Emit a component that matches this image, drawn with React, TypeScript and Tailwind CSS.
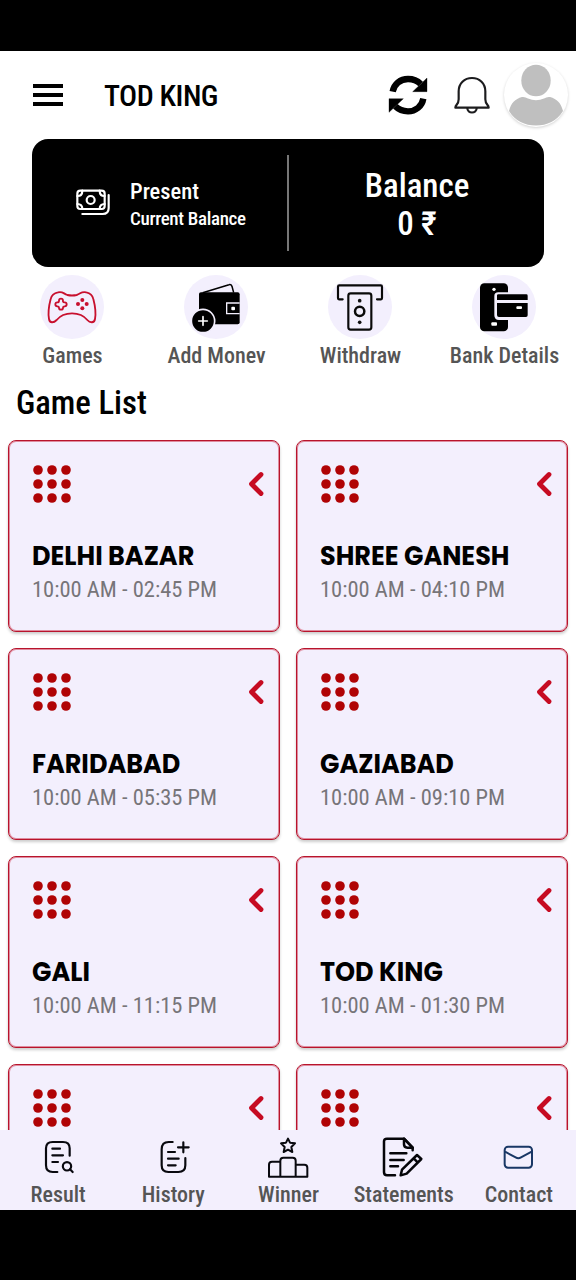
import React from 'react';

const games = [
  { name: 'DELHI BAZAR', time: '10:00 AM - 02:45 PM' },
  { name: 'SHREE GANESH', time: '10:00 AM - 04:10 PM' },
  { name: 'FARIDABAD', time: '10:00 AM - 05:35 PM' },
  { name: 'GAZIABAD', time: '10:00 AM - 09:10 PM' },
  { name: 'GALI', time: '10:00 AM - 11:15 PM' },
  { name: 'TOD KING', time: '10:00 AM - 01:30 PM' },
  { name: '', time: '' },
  { name: '', time: '' },
];

const RefreshIcon = () => (
  <svg className="h-10 w-10" viewBox="36 75 120 120">
    {[0, 180].map((angle) => (
      <g key={angle} transform={`rotate(${angle} 96 135.5)`}>
        <path d="M50 125 C54 102 73 87 96 87 C112 87 124 92 134 102" fill="none" stroke="#000" strokeWidth="19" />
        <path d="M153 84 V125 H110 Z" fill="#000" stroke="#000" strokeWidth="1" />
      </g>
    ))}
  </svg>
);

const BellIcon = () => (
  <svg className="h-10 w-10" viewBox="230 75 120 120" fill="none" stroke="#1c1c1e" strokeWidth="6.5" strokeLinejoin="round">
    <path d="M240 173 C240 164 250 164 250 148 V124 C250 100 267 84 290 84 S330 100 330 124 V148 C330 164 340 164 340 173 Z" />
    <path d="M276 174 C276 192 304 192 304 174" />
  </svg>
);

const AvatarIcon = () => (
  <svg className="h-16 w-16" viewBox="0 0 64 64" fill="#bfbfbf">
    <ellipse cx="32" cy="17.5" rx="14.7" ry="15.8" />
    <path d="M18 34 Q21 33.5 24 35.5 Q32 39 40 35.5 Q43 33.5 46 34 C53 36 57 40 59 48 C53 58 43 62.5 32 62.5 S11 58 5 48 C7 40 11 36 18 34 Z" />
  </svg>
);

const MoneyIcon = () => (
  <svg className="h-[30px] w-9" viewBox="166 178 108 90" fill="none" stroke="#fff" strokeWidth="6.5" strokeLinecap="round">
    <rect x="173" y="186" width="82" height="55" rx="9" />
    <circle cx="213" cy="214" r="12" />
    <path d="M173 202 Q188 202 188 186 M240 186 Q240 202 255 202 M173 226 Q188 226 188 241 M240 241 Q240 226 255 226" />
    <path d="M267 199 V238 Q267 256 249 256 H188" />
  </svg>
);

const GamesIcon = () => (
  <svg className="h-16 w-16" viewBox="120 14 192 192" fill="none" stroke="#c8102e" strokeWidth="5.5" strokeLinejoin="round">
    <path d="M174 66 C188 62 190 70 202 74 Q216 77 230 74 C243 70 244 62 259 66 C269 68 277 73 280 86 C285 105 288 130 285 146 C283 159 270 158 262 149 C250 134 236 129 216 129 S182 134 170 149 C161 158 149 159 147 146 C144 130 147 105 152 86 C155 73 163 68 174 66 Z" />
    <path d="M177 91 Q177 85 183 85 Q189 85 189 91 V94 Q190 96 194 96 Q200 96 200 102 Q200 108 194 108 Q189 108 189 112 Q189 118 183 118 Q177 118 177 112 Q177 108 172 108 Q166 108 166 102 Q166 96 172 96 Q177 96 177 91 Z" />
    <g fill="#c8102e" stroke="none">
      <circle cx="247" cy="89" r="6" />
      <circle cx="234" cy="101" r="6" />
      <circle cx="260" cy="101" r="6" />
      <circle cx="247" cy="114" r="6" />
    </g>
  </svg>
);

const WalletIcon = () => (
  <svg className="h-16 w-16" viewBox="552 14 192 192">
    <path d="M608 67 L687 43 Q693 41 696 48 L701 67" fill="none" stroke="#000" strokeWidth="4.5" />
    <path d="M597 71 Q597 66 603 66 H713 Q719 66 719 72 V156 Q719 162 713 162 H597 Z" />
    <path d="M719 98 H680 V130 H719" fill="none" stroke="#f3effd" strokeWidth="4" />
    <rect x="694" y="109" width="11" height="11" rx="3" fill="#fff" />
    <circle cx="609" cy="152" r="35" stroke="#f3effd" strokeWidth="5" />
    <path d="M609 139 V165 M596 152 H622" stroke="#fff" strokeWidth="5" strokeLinecap="round" />
  </svg>
);

const WithdrawIcon = () => (
  <svg className="h-16 w-16" viewBox="120 14 192 192" fill="none" stroke="#0a0a0a" strokeWidth="6.5" strokeLinecap="round" strokeLinejoin="round">
    <path d="M164 87 H153 Q150 87 150 84 V49 Q150 45 154 45 H278 Q282 45 282 49 V84 Q282 87 279 87 H267" />
    <rect x="181" y="69" width="69" height="109" rx="7" />
    <circle cx="215" cy="123" r="14" strokeWidth="7.5" />
    <circle cx="215" cy="91" r="5.5" fill="#111" stroke="none" />
    <circle cx="215" cy="156" r="5.5" fill="#111" stroke="none" />
  </svg>
);

const BankIcon = () => (
  <svg className="h-16 w-16" viewBox="552 14 192 192">
    <rect x="576" y="39" width="84" height="144" rx="13" />
    <circle cx="618" cy="57" r="5" fill="#fff" />
    <rect x="610" y="156" width="17" height="10" rx="3" fill="#fff" />
    <path d="M631 66 H660 V149 H633 Q619 149 619 134 V77 Q619 66 631 66 Z" fill="#f3effd" />
    <path d="M627 75 Q627 72 631 72 H715 Q719 72 719 76 V89 H627 Z M627 98 H719 V135 Q719 140 714 140 H633 Q627 140 627 134 Z" />
    <rect x="685" y="108" width="17" height="8" rx="3" fill="#fff" />
  </svg>
);

const ResultIcon = () => (
  <svg className="h-12 w-12" viewBox="101 250 144 144" fill="none" stroke="#09090f" strokeWidth="6.5" strokeLinecap="round">
    <path d="M208 318 V296 Q208 277 188 277 H157 Q137 277 137 296 V347 Q137 367 157 367 H171" />
    <path d="M156 297 H179 M156 317 H188 M156 337 H173" />
    <circle cx="200" cy="350" r="12.5" />
    <path d="M209 359 L217 367" />
  </svg>
);

const HistoryIcon = () => (
  <svg className="h-12 w-12" viewBox="446 250 144 144" fill="none" stroke="#09090f" strokeWidth="6.5" strokeLinecap="round">
    <path d="M517 277 H505 Q484 277 484 299 V347 Q484 367 504 367 H534 Q555 367 555 347 V325" />
    <path d="M503 307 H524 M503 327 H535 M503 347 H526 M549 278 V308 M533 293 H565" />
  </svg>
);

const WinnerIcon = () => (
  <svg className="h-12 w-12" viewBox="222 40 144 144" fill="none" stroke="#09090f" strokeWidth="6" strokeLinejoin="round">
    <path d="M294 57 L300 69 L315 71 L304 82 L307 97 L294 90 L281 97 L284 82 L273 71 L288 69 Z" />
    <path d="M271 171 V123 Q271 114 280 114 H308 Q317 114 317 123 V171 M271 126 H246 Q237 126 237 135 V171 H352 V144 Q352 135 343 135 H317" />
  </svg>
);

const StatementsIcon = () => (
  <svg className="h-12 w-12" viewBox="568 40 144 144" fill="none" stroke="#050509" strokeWidth="7.5" strokeLinecap="round" strokeLinejoin="round">
    <path d="M616 167 H592 Q583 167 583 158 V65 Q583 57 592 57 H643 L669 84 V92" />
    <path d="M643 57 V74 Q643 84 653 84 H669 Z" />
    <path d="M602 101 H650 M602 121 H642 M602 140 H625" />
    <path d="M682 106 L695 118 L651 162 L633 167 L637 150 Z M672 116 L684 128" />
  </svg>
);

const ContactIcon = () => (
  <svg className="h-12 w-12" viewBox="913 40 144 144" fill="none" stroke="#193765" strokeWidth="6" strokeLinejoin="round">
    <rect x="945" y="81" width="82" height="63" rx="10" />
    <path d="M946 96 L978 113 Q986 118 994 113 L1026 96" />
  </svg>
);

const actions = [
  { label: 'Games', icon: <GamesIcon /> },
  { label: 'Add Money', icon: <WalletIcon /> },
  { label: 'Withdraw', icon: <WithdrawIcon /> },
  { label: 'Bank Details', icon: <BankIcon /> },
];

const tabs = [
  { label: 'Result', icon: <ResultIcon /> },
  { label: 'History', icon: <HistoryIcon /> },
  { label: 'Winner', icon: <WinnerIcon /> },
  { label: 'Statements', icon: <StatementsIcon /> },
  { label: 'Contact', icon: <ContactIcon /> },
];

function GameCard({ name, time }: { name: string; time: string }) {
  return (
    <div className="h-48 rounded-lg border border-[#b8142c] bg-[#f3effd] pl-[23px] pr-[15px] pt-[23px] shadow-[0_2px_3px_rgba(0,0,0,0.2),inset_0_0_0_1px_rgba(200,20,44,0.45)]">
      <div className="flex items-center justify-between">
        <svg className="h-10 w-10" viewBox="0 0 40 40" fill="#b00305">
          {[6, 20, 34].map((y) => [6, 20, 34].map((x) => <circle key={`${x}-${y}`} cx={x} cy={y} r="4.8" />))}
        </svg>
        <svg className="h-7 w-4" viewBox="0 0 16 28" fill="none" stroke="#c60b22" strokeWidth="4.8" strokeLinecap="round" strokeLinejoin="round">
          <path d="M13 4.5 L3.5 14 L13 23.5" />
        </svg>
      </div>
      {name && (
        <>
          <h3 className="mt-[34px] h-9 whitespace-nowrap font-['Poppins','Inter',sans-serif] text-[25.5px] font-bold leading-9 text-black">{name}</h3>
          <p className="h-[30px] whitespace-nowrap text-[22.5px] leading-[30px] text-[#777579]">{time}</p>
        </>
      )}
    </div>
  );
}

export default function App() {
  return (
    <div className="flex h-[1280px] w-[576px] flex-col overflow-hidden bg-white font-['Roboto_Condensed','Roboto',sans-serif] [font-stretch:75%]">
      <div className="h-[51px] shrink-0 bg-black" />

      {/* Header */}
      <header className="flex h-[88px] shrink-0 items-center pl-8 pr-2">
        <svg className="h-8 w-8" viewBox="0 0 32 32" fill="#000">
          <path d="M1 5 H31 V9 H1 Z M1 14 H31 V18 H1 Z M1 23 H31 V27 H1 Z" />
        </svg>
        <h1 className="ml-10 whitespace-nowrap pt-0.5 text-[30px] font-medium leading-10 tracking-[-0.5px] text-black">TOD KING</h1>
        <div className="ml-auto flex items-center">
          <RefreshIcon />
          <div className="ml-6"><BellIcon /></div>
          <div className="ml-3 rounded-full shadow-[0_1px_3px_rgba(0,0,0,0.18)]"><AvatarIcon /></div>
        </div>
      </header>

      {/* Balance */}
      <section className="mx-8 flex h-32 shrink-0 items-center rounded-2xl bg-black text-white">
        <div className="flex h-24 w-[257px] items-center border-r-2 border-[#777] pl-[43px]">
          <MoneyIcon />
          <div className="ml-[19px] whitespace-nowrap pt-[3px] font-medium">
            <p className="text-[22.5px] leading-7">Present</p>
            <p className="text-[19px] leading-7 tracking-[-0.33px]">Current Balance</p>
          </div>
        </div>
        <div className="flex-1 pl-px pt-[3px] text-center text-[33px] font-medium leading-[38px]">
          <p>Balance</p>
          <p>0 ₹</p>
        </div>
      </section>

      {/* Shortcuts */}
      <nav className="mt-2 grid shrink-0 grid-cols-4">
        {actions.map((action) => (
          <div key={action.label} className="flex flex-col items-center">
            <div className="rounded-full bg-[#f3effd]">{action.icon}</div>
            <span className="mt-[5px] h-[19px] overflow-hidden whitespace-nowrap pl-px text-[22px] font-medium leading-6 text-[#555]">{action.label}</span>
          </div>
        ))}
      </nav>

      <h2 className="mb-[17px] mt-5 h-10 shrink-0 pl-4 text-[32.8px] font-medium leading-10 text-black">Game List</h2>

      <main className="grid min-h-0 flex-1 auto-rows-[192px] grid-cols-2 gap-4 overflow-hidden px-2">
        {games.map((game, index) => (
          <GameCard key={index} name={game.name} time={game.time} />
        ))}
      </main>

      {/* Bottom bar */}
      <footer className="grid h-20 shrink-0 grid-cols-5 bg-[#f3effd] pt-[3px]">
        {tabs.map((tab) => (
          <div key={tab.label} className="flex flex-col items-center">
            {tab.icon}
            <span className="h-7 whitespace-nowrap pl-px text-[22px] font-medium leading-7 text-[#555]">{tab.label}</span>
          </div>
        ))}
      </footer>
      <div className="h-[70px] shrink-0 bg-black" />
    </div>
  );
}
